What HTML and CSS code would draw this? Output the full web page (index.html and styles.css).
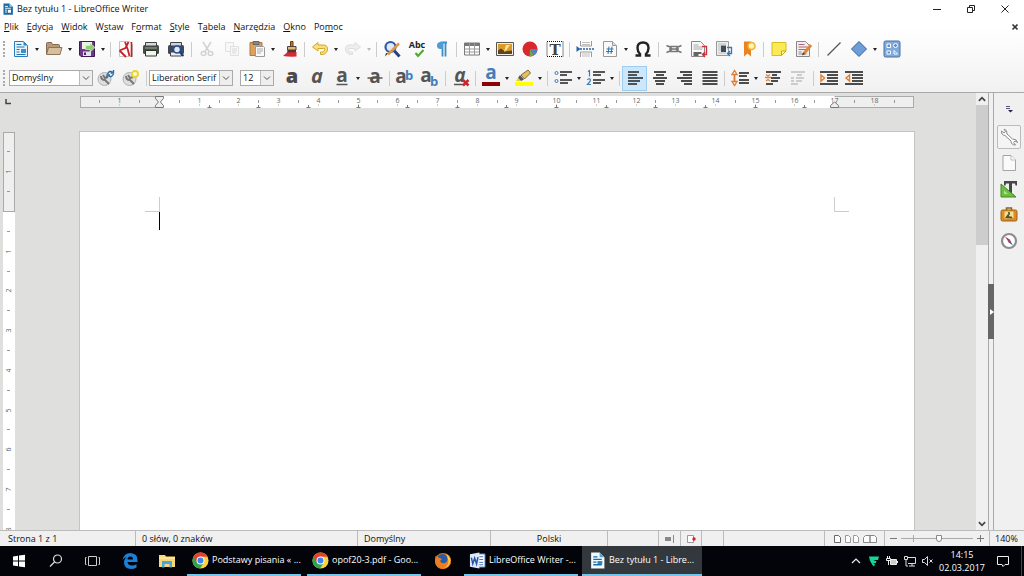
FILE: index.html
```html
<!DOCTYPE html>
<html lang="pl">
<head>
<meta charset="utf-8">
<title>Bez tytułu 1 - LibreOffice Writer</title>
<link rel="stylesheet" href="styles.css">
</head>
<body>
<svg class="defs" aria-hidden="true">
  <symbol id="doc" viewBox="0 0 16 16"><path d="M2 .5h8l4.500 4.500v10.500H2z" fill="#1b6aa5"/><path d="M10 .5V5h4.500z" fill="#9fd2f2"/><path d="M4 4.500h4M4 7h8M4 9.500h3M4 12h3" stroke="#fff" stroke-width="1.200"/><path d="M8 9h4v4H8z" fill="#fff"/></symbol>
  <symbol id="doc-light" viewBox="0 0 16 16"><path d="M2 .5h8l4.500 4.500v10.500H2z" fill="#f2f9ff"/><path d="M10 .5V5h4.500z" fill="#4fa3d8"/><path d="M4 4.500h4M4 7h8M4 9.500h3M4 12h8" stroke="#1b6aa5" stroke-width="1.200"/><path d="M8 8.500h4.500v3H8z" fill="#2f83be"/></symbol>
  <symbol id="chrome" viewBox="0 0 18 18"><circle cx="9" cy="9" r="8.500" fill="#fdd23c"/><path d="M1.600 4.800A8.500 8.500 0 0 0 8.500 17.500L12.500 11 9 9z" fill="#2ea44f"/><path d="M1.600 4.800 5.500 11 9 9V5h7.500A8.500 8.500 0 0 0 1.600 4.800z" fill="#e6402f"/><circle cx="9" cy="9" r="4.200" fill="#fff"/><circle cx="9" cy="9" r="3.200" fill="#3f83ee"/></symbol>
</svg>

<header class="chrome">
  <div class="titlebar">
    <svg class="app-icon"><use href="#doc"/></svg>
    <h1 class="title">Bez tytułu 1 - LibreOffice Writer</h1>
    <div class="window-controls">
      <button class="win" aria-label="Minimalizuj"><svg viewBox="0 0 10 10"><path d="M1 5.500h8" stroke="#222"/></svg></button>
      <button class="win" aria-label="Przywróć"><svg viewBox="0 0 10 10" fill="none" stroke="#222"><path d="M1.500 3.500h5v5h-5zM3.500 3V1.500h5v5H7"/></svg></button>
      <button class="win" aria-label="Zamknij"><svg viewBox="0 0 10 10"><path d="m1.500 1.500 7 7m0-7-7 7" stroke="#222"/></svg></button>
    </div>
  </div>
  <nav class="menubar">
    <button class="menu"><u>P</u>lik</button>
    <button class="menu"><u>E</u>dycja</button>
    <button class="menu"><u>W</u>idok</button>
    <button class="menu">W<u>s</u>taw</button>
    <button class="menu">F<u>o</u>rmat</button>
    <button class="menu"><u>S</u>tyle</button>
    <button class="menu">T<u>a</u>bela</button>
    <button class="menu"><u>N</u>arzędzia</button>
    <button class="menu"><u>O</u>kno</button>
    <button class="menu">Po<u>m</u>oc</button>
    <button class="close-doc" aria-label="Zamknij dokument"><svg viewBox="0 0 8 8"><path d="m1.500 1.500 5 5m0-5-5 5" stroke="#333" stroke-width="1.600"/></svg></button>
  </nav>

  <div class="toolbar standard">
    <span class="grip"></span>
    <button class="tool" aria-label="Nowy"><svg viewBox="0 0 18 18"><path d="M2.500 1.500h9l4 4v11h-13z" fill="#e6f3fc" stroke="#2f7db8"/><path d="M11.500 1.500v4h4z" fill="#2f86c4"/><path d="M4.500 4.500h5M4.500 7h8M4.500 9.500h3M4.500 12h3M4.500 14.500h9" stroke="#2774ad"/><path d="M9 9h5v4H9z" fill="#3f8fca"/></svg></button><button class="more" aria-label="Więcej: nowy"></button>
    <button class="tool" aria-label="Otwórz"><svg viewBox="0 0 18 18"><path d="M1.500 14V3.500q0-1 1-1h4l1 2h6q1 0 1 1V8" fill="#b79a78" stroke="#84694d"/><path d="m1.500 14.500 2-7h13.500l-2 7z" fill="#d6bf9f" stroke="#8f7355"/></svg></button><button class="more" aria-label="Więcej: otwórz"></button>
    <button class="tool" aria-label="Zapisz"><svg viewBox="0 0 18 18"><path d="M1.500 1.500h15v15H3l-1.500-1.500z" fill="#6c3a86" stroke="#3e1b55"/><path d="M4 2h10v7H4z" fill="#e9f3e4"/><path d="M5 11.500h8V16H5z" fill="#e8e2ed"/><path d="M6 12.500h2V15H6z" fill="#4a2562"/><path d="M7.500 5.500h4.500V3L17 7.500 12 12V9.500H7.500z" fill="#8ccf73" stroke="#e9f7e2" stroke-width=".6"/></svg></button><button class="more" aria-label="Więcej: zapisz"></button>
    <span class="sep"></span>
    <button class="tool" aria-label="Eksportuj jako PDF"><svg viewBox="0 0 18 18"><path d="M2.500 1.500h10l3 3v12h-13z" fill="#fff" stroke="#c6c6c6"/><path d="M14.500 2v15" stroke="#c01f27" stroke-width="1.600"/><path d="M8 2q3 7 4.500 14M2.500 10.500 8.500 8l3-6M2.500 10.500 9 17" fill="none" stroke="#cc2027" stroke-width="1.800"/></svg></button>
    <button class="tool" aria-label="Drukuj"><svg viewBox="0 0 18 18"><rect x="1" y="5" width="16" height="9" rx="1.500" fill="#474c49"/><path d="M3.500 2.500h11V6h-11z" fill="#d5dbd5" stroke="#444"/><path d="M3.500 10.500h11v5.500h-11z" fill="#eef8e8" stroke="#333"/><path d="M3 8h12" stroke="#9bac98"/></svg></button>
    <button class="tool" aria-label="Podgląd wydruku"><svg viewBox="0 0 18 18"><rect x="1" y="5" width="16" height="9" rx="1.500" fill="#3e4a59"/><path d="M3.500 2.500h11V6h-11z" fill="#ccd5de" stroke="#444"/><path d="M3.500 12h11v4h-11z" fill="#eee" stroke="#444"/><circle cx="10" cy="9.500" r="3.500" fill="#dceaff" stroke="#2b4c92" stroke-width="1.600"/><path d="m12.500 12 4 4" stroke="#1f3d80" stroke-width="2"/></svg></button>
    <span class="sep"></span>
    <button class="tool" aria-label="Wytnij" disabled><svg viewBox="0 0 18 18" fill="none" stroke="#d2d2d2" stroke-width="1.500"><path d="m5 2 6 9.500M13 2 7 11.500"/><ellipse cx="5.500" cy="13.500" rx="2.300" ry="2"/><ellipse cx="12.500" cy="13.500" rx="2.300" ry="2"/></svg></button>
    <button class="tool" aria-label="Kopiuj" disabled><svg viewBox="0 0 18 18" fill="#f8f8f8" stroke="#e0e0e0"><path d="M2.500 2.500h8v9h-8z"/><path d="M7.500 6.500h8v9h-8z"/><path d="M9 9h5M9 11h5M9 13h4" stroke="#d8d8d8"/></svg></button>
    <button class="tool" aria-label="Wklej"><svg viewBox="0 0 18 18"><path d="M2 2.500h12v13H2z" fill="#dca15d" stroke="#b07a3b"/><path d="M5 1.500h6v3H5z" fill="#888" stroke="#666"/><path d="M7.500 6.500h8l1 1v9h-9z" fill="#fafafa" stroke="#999"/><path d="M9 9h6M9 11h6M9 13h4" stroke="#aaa"/></svg></button><button class="more" aria-label="Więcej: wklej"></button>
    <button class="tool" aria-label="Klonuj formatowanie"><svg viewBox="0 0 18 18"><path d="M9.500 1.500H12v5H9.500z" fill="#c2762f" stroke="#71380c"/><path d="M6.500 6.500H15V10H6.500z" fill="#e0b67a" stroke="#4e433c"/><path d="M6.500 10H15v3.500H6z" fill="#4b3a32"/><path d="M6 12.500 15.500 12v4.500q-7 .5-13.500-.5z" fill="#d42a35"/></svg></button>
    <span class="sep slim"></span>
    <button class="tool" aria-label="Cofnij"><svg viewBox="0 0 18 18"><path d="M1.500 7 7 2.500V5h5q4.500 0 4.500 4t-4.500 5.500H9.500V12H12q1.800-.8 1.800-2.700T12 8.500H7V11z" fill="#f9e07c" stroke="#cfa928"/></svg></button><button class="more" aria-label="Więcej: cofnij"></button>
    <button class="tool" aria-label="Ponów" disabled><svg viewBox="0 0 18 18"><path d="M16.500 7 11 2.500V5H6Q1.500 5 1.500 9T6 14.500h2.500V12H6q-1.800-.8-1.800-2.700T6 8.500h5V11z" fill="#eee" stroke="#dedede"/></svg></button><button class="more faded" aria-label="Więcej: ponów" disabled></button>
    <span class="sep"></span>
    <button class="tool" aria-label="Znajdź i zamień"><svg viewBox="0 0 18 18"><circle cx="7.500" cy="7" r="5" fill="#dde9f8" stroke="#3158a5" stroke-width="2.200"/><path d="m11.500 11 5 5.500" stroke="#28407d" stroke-width="3"/><path d="M16 3.500 5 14.500" stroke="#e09645" stroke-width="2.500"/><path d="m5 13.500-3 3 1-3.500z" fill="#333"/></svg></button>
    <button class="tool" aria-label="Pisownia"><svg viewBox="0 0 18 18"><text class="glyph-sans" x="9" y="8" font-size="9" fill="#222">Abc</text><path d="m7.500 13 2.500 3 5.500-6" fill="none" stroke="#50a62e" stroke-width="2"/></svg></button>
    <button class="tool" aria-label="Znaki niedrukowane"><svg viewBox="0 0 18 18"><path d="M7.500 2.500H14M9.500 2.500v14M12.500 2.500v14" stroke="#3c8cc6" stroke-width="1.800"/><path d="M10 2H7.500Q4 2 4 5.500T7.500 9H10z" fill="#4c9dd5"/></svg></button>
    <span class="sep slim"></span>
    <button class="tool" aria-label="Tabela"><svg viewBox="0 0 18 18"><path d="M1.500 3h15v12h-15z" fill="#fff" stroke="#777"/><path d="M1 3h16v3H1z" fill="#777"/><path d="M1.500 9h15M1.500 12h15M6.500 3v12M11.500 3v12" stroke="#999"/></svg></button><button class="more" aria-label="Więcej: tabela"></button>
    <button class="tool" aria-label="Obraz"><svg viewBox="0 0 18 18"><path d="M.5 2.500h17v13H.5z" fill="#eee" stroke="#555"/><path d="M2 4h14v10H2z" fill="#d99c2b"/><path d="M2 14v-3.500l3-2 4 3 7-1V14z" fill="#5d441a"/><path d="m8 12 2-7h4l-3.500 5z" fill="#ffe49a"/></svg></button>
    <button class="tool" aria-label="Wykres"><svg viewBox="0 0 18 18"><circle cx="9" cy="9" r="7.500" fill="#d9272c"/><path d="M9 9 16.500 9A7.500 7.500 0 0 1 13 15.300z" fill="#4f83c4"/><path d="m9 9 4 6.300q-2 1.200-4.500 1.200z" fill="#69a84c"/></svg></button>
    <button class="tool" aria-label="Pole tekstowe"><svg viewBox="0 0 18 18"><path d="M1 1.500h16v15H1z" fill="#fff" stroke="#111" stroke-dasharray="1 1"/><text class="glyph" x="9" y="14.500" font-size="15">T</text></svg></button>
    <span class="sep slim"></span>
    <button class="tool" aria-label="Podział strony"><svg viewBox="0 0 18 18"><path d="M4.500 1v5h11V1M4.500 17v-5h11v5" fill="#fff" stroke="#999"/><path d="M6 2.500h8M6 4.500h8M6 14h8M6 16h8" stroke="#bbb"/><path d="M4 9h14" stroke="#2564a6" stroke-width="1.500" stroke-dasharray="2 1"/><path d="m.5 6 4 3-4 3z" fill="#2564a6"/></svg></button>
    <button class="tool" aria-label="Pole"><svg viewBox="0 0 18 18"><path d="M2.500 1.500h9l4 4v11h-13z" fill="#fafafa" stroke="#999"/><path d="M11.500 1.500v4h4" fill="#ddd" stroke="#999"/><path d="M8 6.500 7 14M11 6.500 10 14M5.500 9h7M5 11.500h7" stroke="#3474ae"/></svg></button><button class="more" aria-label="Więcej: pole"></button>
    <button class="tool" aria-label="Znak specjalny"><svg viewBox="0 0 18 18"><path d="M1.500 15.500H6V14Q3.500 11.500 3.500 8 3.500 2.500 9 2.500T14.500 8q0 3.500-2.500 6v1.500h4.500" fill="none" stroke="#222" stroke-width="2.400"/></svg></button>
    <span class="sep"></span>
    <button class="tool" aria-label="Hiperłącze"><svg viewBox="0 0 18 18" fill="none" stroke="#777" stroke-width="1.500"><path d="M1.500 5.500 5 7l2 2-2 2-3.500 1.500M16.500 5.500 13 7l-2 2 2 2 3.500 1.500M4 9h10M5 6.500h8M5 11.500h8"/></svg></button>
    <button class="tool" aria-label="Przypis dolny"><svg viewBox="0 0 18 18"><path d="M1.500 1.500h9l4 4v11h-13z" fill="#f8f8f8" stroke="#888"/><path d="M3.500 5h5M3.500 7h9M3.500 9h9" stroke="#aaa"/><path d="M3.500 13h8M3.500 15h5" stroke="#333" stroke-width="1.500"/><path d="M12 6.500h4.500v8H13M15 12l-2.500 2.500L15 17" fill="none" stroke="#c93136" stroke-width="1.300"/></svg></button>
    <button class="tool" aria-label="Przypis końcowy"><svg viewBox="0 0 18 18"><path d="M1.500 1.500h12v14h-12z" fill="#eee" stroke="#999"/><path d="M3 4h8M3 6h3M3 8h3M3 10h3M3 13h8" stroke="#bbb"/><path d="M6 5.500h5V12H6z" fill="#3f4c5a"/><path d="M12 7.500h4.500v6H13M15 11l-2.500 2.500L15 16" fill="none" stroke="#3776b8" stroke-width="1.300"/></svg></button>
    <button class="tool" aria-label="Zakładka"><svg viewBox="0 0 18 18"><path d="M4 1.500h7v15l-3.500-3-3.500 3z" fill="#e98320"/><circle cx="11.500" cy="6" r="3.500" fill="#fff2b2" stroke="#f0b030" stroke-width="1.500"/></svg></button>
    <span class="sep slim"></span>
    <button class="tool" aria-label="Komentarz"><svg viewBox="0 0 18 18"><path d="M2 2.500h14v8.500L11.500 15.500H2z" fill="#fbe956" stroke="#d6bd22"/><path d="M16 11h-4.500v4.500z" fill="#fffbc8" stroke="#c7aa1b"/></svg></button>
    <button class="tool" aria-label="Śledź zmiany"><svg viewBox="0 0 18 18"><path d="M1.500 1.500h9l4 4v11h-13z" fill="#f2eef0" stroke="#888"/><path d="M3.500 4.500h6M3.500 7h9M3.500 9.500h8" stroke="#a67"/><path d="M3.500 12h3M3.500 14h8" stroke="#888"/><path d="m16 5-7 8.500" stroke="#e48435" stroke-width="3"/><path d="m8 12.500-1 3 3-1.500z" fill="#333"/></svg></button>
    <span class="sep slim"></span>
    <button class="tool" aria-label="Linia"><svg viewBox="0 0 18 18"><path d="M2.500 15.500 15.500 2.500" stroke="#555" stroke-width="1.300"/></svg></button>
    <button class="tool" aria-label="Romb"><svg viewBox="0 0 18 18"><path d="M9 1.500 16.500 9 9 16.500 1.500 9z" fill="#6d9ed7" stroke="#355f99"/></svg></button><button class="more" aria-label="Więcej: kształty"></button>
    <button class="tool" aria-label="Funkcje rysowania"><svg viewBox="0 0 18 18"><rect x="1" y="1" width="16" height="16" rx="1.500" fill="#82a9dc" stroke="#48719f"/><g fill="#5f8dc8" stroke="#fff"><path d="M4 4h3.500v3.500H4zM4 11h3.500v3H4zM11 10.500v3.500h3.500z"/><circle cx="12.500" cy="5.500" r="2"/></g></svg></button>
  </div>

  <div class="toolbar formatting">
    <span class="grip"></span>
    <span class="combo wide"><select aria-label="Styl akapitu"><option>Domyślny</option></select><svg class="chevron" viewBox="0 0 12 14"><path d="m3 5.500 3 3 3-3" fill="none" stroke="#555"/></svg></span>
    <button class="tool" aria-label="Aktualizuj styl"><svg viewBox="0 0 18 18"><circle cx="7.500" cy="10" r="6.500" fill="#dedede" stroke="#b0b0b0"/><path d="M4 7q0 4 4 4l4 4M6 6l2 3 3-1" fill="none" stroke="#777" stroke-width="2"/><path d="M10.500 5q2-4 5-2M16.500 5q-2 4-5 2M16.500 1v3h-3M10 9V6h3" fill="none" stroke="#2b69a8" stroke-width="1.400"/></svg></button>
    <button class="tool" aria-label="Nowy styl"><svg viewBox="0 0 18 18"><circle cx="7.500" cy="10" r="6.500" fill="#dedede" stroke="#b0b0b0"/><path d="M4 7q0 4 4 4l4 4M6 6l2 3 3-1" fill="none" stroke="#777" stroke-width="2"/><circle cx="13" cy="5" r="3" fill="#fffbd0" stroke="#ecd32b" stroke-width="1.800"/></svg></button>
    <span class="sep"></span>
    <span class="combo wide"><select aria-label="Nazwa czcionki"><option>Liberation Serif</option></select><svg class="chevron" viewBox="0 0 12 14"><path d="m3 5.500 3 3 3-3" fill="none" stroke="#555"/></svg></span>
    <span class="combo size"><select aria-label="Rozmiar czcionki"><option>12</option></select><svg class="chevron" viewBox="0 0 12 14"><path d="m3 5.500 3 3 3-3" fill="none" stroke="#555"/></svg></span>
    <button class="tool" aria-label="Pogrubienie"><svg viewBox="0 0 18 18"><text class="letter heavy" x="9" y="14" font-size="20">a</text></svg></button>
    <button class="tool" aria-label="Kursywa"><svg viewBox="0 0 18 18"><text class="letter slanted" x="9" y="14" font-size="20">a</text></svg></button>
    <button class="tool" aria-label="Podkreślenie"><svg viewBox="0 0 18 18"><text class="letter" x="9" y="13" font-size="19">a</text><path d="M3.500 15.500h11" stroke="#555" stroke-width="1.500"/></svg></button><button class="more" aria-label="Więcej: podkreślenie"></button>
    <button class="tool" aria-label="Przekreślenie"><svg viewBox="0 0 18 18"><text class="letter" x="9" y="14" font-size="19">a</text><path d="M1.500 9h15" stroke="#555" stroke-width="1.500"/></svg></button>
    <span class="sep slim"></span>
    <button class="tool" aria-label="Indeks górny"><svg viewBox="0 0 18 18"><text class="letter" x="5" y="14" font-size="19">a</text><text class="glyph-sans blue" x="13" y="11" font-size="13">b</text></svg></button>
    <button class="tool" aria-label="Indeks dolny"><svg viewBox="0 0 18 18"><text class="letter" x="5" y="13" font-size="19">a</text><text class="glyph-sans blue" x="13" y="17" font-size="13">b</text></svg></button>
    <span class="sep"></span>
    <button class="tool" aria-label="Wyczyść formatowanie"><svg viewBox="0 0 18 18"><text class="letter slanted" x="8" y="13" font-size="19">a</text><path d="M2 15.500h9" stroke="#555" stroke-width="1.500"/><path d="m11 11 5.500 5.500m0-5.500L11 16.500" stroke="#c9252c" stroke-width="2.500"/></svg></button>
    <span class="sep slim"></span>
    <button class="tool" aria-label="Kolor czcionki"><svg viewBox="0 0 18 18"><text class="letter blue" x="9" y="10" font-size="19">a</text><path d="M0 13h18v4H0z" fill="#8b0000"/></svg></button><button class="more" aria-label="Więcej: kolor czcionki"></button>
    <button class="tool" aria-label="Wyróżnienie"><svg viewBox="0 0 18 18"><path d="M0 13h18v4H0z" fill="#ff0"/><path d="m6 6 7-5 2.500 3-6 6z" fill="#e9bf52" stroke="#7a6c4a"/><path d="m5 6 4 4.500-3 1.500-3-3z" fill="#555"/><path d="m3 9 2.500 3H1z" fill="#e4d428"/></svg></button><button class="more" aria-label="Więcej: wyróżnienie"></button>
    <span class="sep"></span>
    <button class="tool" aria-label="Punktory"><svg viewBox="0 0 18 18"><g fill="none" stroke="#3c7ab8"><circle cx="2.500" cy="4" r="1.500"/><circle cx="2.500" cy="12" r="1.500"/></g><path d="M6 3h12M6 6h7M6 11h12M6 14h8" stroke="#555" stroke-width="2"/></svg></button><button class="more" aria-label="Więcej: punktory"></button>
    <button class="tool" aria-label="Numerowanie"><svg viewBox="0 0 18 18"><path d="M1 2.500 2.500 1.500v6M.5 11q.5-1.500 2-1.200t.5 2.700L.5 15.500H4" fill="none" stroke="#3c7ab8" stroke-width="1.200"/><path d="M6 3h12M6 6h8M6 11h12M6 14h8" stroke="#555" stroke-width="2"/></svg></button><button class="more" aria-label="Więcej: numerowanie"></button>
    <span class="sep"></span>
    <button class="tool pressed" aria-label="Do lewej" aria-pressed="true"><svg viewBox="0 0 18 18"><path d="M2 3h11M2 6h9M2 9h15M2 12h12M2 15h9" stroke="#4b545b" stroke-width="1.800"/></svg></button>
    <button class="tool" aria-label="Wyśrodkuj"><svg viewBox="0 0 18 18"><path d="M3 3h12M5 6h8M2 9h14M4 12h10M5 15h8" stroke="#4c4c4c" stroke-width="1.800"/></svg></button>
    <button class="tool" aria-label="Do prawej"><svg viewBox="0 0 18 18"><path d="M4 3h12M7 6h9M1 9h15M5 12h11M8 15h8" stroke="#4c4c4c" stroke-width="1.800"/></svg></button>
    <button class="tool" aria-label="Wyjustuj"><svg viewBox="0 0 18 18"><path d="M1.500 3h15M1.500 6h15M1.500 9h15M1.500 12h15M1.500 15h15" stroke="#4c4c4c" stroke-width="1.800"/></svg></button>
    <span class="sep slim"></span>
    <button class="tool" aria-label="Interlinia"><svg viewBox="0 0 18 18"><path d="M3.500 4v10" stroke="#dc7b31" stroke-width="1.800"/><path d="M1 5.500 3.500 1.500 6 5.500zM1 12.500l2.500 4 2.500-4z" fill="#fff" stroke="#dc7b31" stroke-width="1.300"/><path d="M8 4h10M8 7h8M8 11h10M8 14h10" stroke="#4c4c4c" stroke-width="1.800"/></svg></button><button class="more" aria-label="Więcej: interlinia"></button>
    <button class="tool" aria-label="Zwiększ odstęp akapitu"><svg viewBox="0 0 18 18"><path d="M2 3h15M8 6h5M7 9h9M7 12h7M2 15h7" stroke="#4c4c4c" stroke-width="1.800"/><path d="M1 8.500h6M2 5.500 4 7l2-1.500M2 12l2-1.500L6 12" fill="none" stroke="#e38438" stroke-width="1.300"/></svg></button>
    <button class="tool" aria-label="Zmniejsz odstęp akapitu" disabled><svg viewBox="0 0 18 18"><path d="M2 3h14M8 6h5M2 9h3M7 9h8M2 12h3M7 12h6M2 15h7" stroke="#ccc" stroke-width="1.800"/></svg></button>
    <span class="sep"></span>
    <button class="tool" aria-label="Zwiększ wcięcie"><svg viewBox="0 0 18 18"><path d="M0 3h18M7 6h11M7 9h11M7 12h11M0 15h18" stroke="#4c4c4c" stroke-width="1.800"/><path d="m1 6 3.500 3L1 12z" fill="#fff" stroke="#df8137" stroke-width="1.500"/></svg></button>
    <button class="tool" aria-label="Zmniejsz wcięcie"><svg viewBox="0 0 18 18"><path d="M0 3h18M7 6h11M7 9h11M7 12h11M0 15h18" stroke="#4c4c4c" stroke-width="1.800"/><path d="M4.500 6 1 9l3.500 3z" fill="#fff" stroke="#df8137" stroke-width="1.500"/></svg></button>
  </div>
</header>

<div class="workspace">
  <div class="left-rail">
    <button class="tab-kind" aria-label="Tabulator"><svg viewBox="0 0 6 6"><path d="M1 0v4.500h5" fill="none" stroke="#444" stroke-width="1.500"/></svg></button>
    <svg class="vruler" id="vruler"></svg>
  </div>
  <main class="canvas">
    <svg class="hruler" id="hruler"></svg>
    <article class="sheet">
      <div class="corners"><span class="corner left"></span><span class="corner right"></span></div>
      <div class="body-text" contenteditable="true" role="textbox" aria-label="Treść dokumentu"><span class="caret"></span></div>
    </article>
  </main>
  <div class="scrollbar">
    <button class="scroll-btn" aria-label="W górę"><svg viewBox="0 0 8 8"><path d="M1.500 5.500 4 3l2.500 2.500" fill="none" stroke="#444" stroke-width="1.400"/></svg></button>
    <div class="track"><div class="thumb"></div></div>
    <button class="scroll-btn" aria-label="W dół"><svg viewBox="0 0 8 8"><path d="M1.500 2.500 4 5l2.500-2.500" fill="none" stroke="#444" stroke-width="1.400"/></svg></button>
  </div>
  <div class="splitter"><button class="handle" aria-label="Ukryj panel"><svg viewBox="0 0 5 6"><path d="M1 0v6l4-3z" fill="#fff"/></svg></button></div>
  <aside class="sidebar">
    <button class="side-menu" aria-label="Ustawienia panelu"><svg viewBox="0 0 8 8"><path d="M1 1.500h4M1 3.500h4" stroke="#557"/><path d="M3 5h5L5.500 7.500z" fill="#224"/></svg></button>
    <button class="side boxed" aria-label="Właściwości"><svg viewBox="0 0 18 18"><path d="M1.500 3Q1 7 5 7.500L11 13q0 4 4.500 4l-2-2.500 1.500-1.500 2.500 1.500Q17 11 12.500 11L7 6Q7.500 2 4 1l1.500 2.500L4 5z" fill="#fff" stroke="#888"/></svg></button>
    <button class="side" aria-label="Strona"><svg viewBox="0 0 18 18"><path d="M3 1.500h8l4.500 4.500v10.500H3z" fill="#fafafa" stroke="#a5a5a5"/><path d="M11 1.500V6h4.500" fill="#fff" stroke="#bbb"/></svg></button>
    <button class="side" aria-label="Style"><svg viewBox="0 0 18 18"><path d="M4 1h13v4.500h-1.500L15 3.500h-3v11h2V16H7v-1.500h2v-11H6l-.5 2H4z" fill="#474747"/><path d="M1 4v13h15z" fill="#70be40" stroke="#3f8d1e"/><path d="M4 10.500V14h4z" fill="#b0e28c"/></svg></button>
    <button class="side" aria-label="Galeria"><svg viewBox="0 0 18 18"><path d="M6.500 4V2h5v2" fill="none" stroke="#8a621e" stroke-width="1.500"/><rect x="1" y="4" width="16" height="11" rx="1.500" fill="#df8b1e" stroke="#9c6419"/><path d="M4.500 5.500h9v7h-9z" fill="#f8dd97"/><path d="m5 12 3-4 2 3 1-1 2 2.500z" fill="#4e5228"/><path d="M9 6v3" stroke="#53723c" stroke-width="2"/></svg></button>
    <button class="side" aria-label="Nawigator"><svg viewBox="0 0 18 18"><circle cx="9" cy="9" r="7" fill="#fff" stroke="#8d8d8d" stroke-width="2.200"/><path d="m5 4.500 5.500 3.500-2 2z" fill="#b3345a"/><path d="m13 13.500-5-3.500 2-2z" fill="#5a5a7a"/></svg></button>
  </aside>
</div>

<footer class="statusbar">
  <span class="cell">Strona 1 z 1</span>
  <span class="cell">0 słów, 0 znaków</span>
  <span class="cell">Domyślny</span>
  <span class="cell center">Polski</span>
  <span class="cell"></span>
  <span class="cell center"><svg class="st" viewBox="0 0 10 8"><path d="M0 2h6v4H0z" fill="#888"/><path d="M8.500 0v8" stroke="#888"/></svg></span>
  <span class="cell center"><svg class="st" viewBox="0 0 10 8"><path d="M1.500.5h6v7h-6z" fill="#fff" stroke="#999"/><circle cx="8" cy="4" r="1.700" fill="#c22"/></svg></span>
  <span class="cell"></span>
  <span class="cell"></span>
  <span class="cell views">
    <button aria-label="Jedna strona"><svg viewBox="0 0 7 8"><path d="M.5.5h4l2 2v5h-6z" fill="#fff" stroke="#666"/></svg></button>
    <button aria-label="Wiele stron"><svg class="two" viewBox="0 0 14 8"><path d="M.5.5h3l2 2v5h-5zM8.500.5h3l2 2v5h-5z" fill="#fff" stroke="#999"/></svg></button>
    <button aria-label="Książka"><svg class="two" viewBox="0 0 14 8"><path d="M2.500.5H7v7H.5v-5zM7 .5h4.500l2 2v5H7z" fill="#fff" stroke="#888"/></svg></button>
  </span>
  <span class="cell zoom">
    <button aria-label="Pomniejsz"><svg viewBox="0 0 7 7"><path d="M0 3.500h7" stroke="#777"/></svg></button>
    <input type="range" min="0" max="100" value="53" aria-label="Powiększenie">
    <button aria-label="Powiększ"><svg viewBox="0 0 7 7"><path d="M0 3.500h7M3.500 0v7" stroke="#777"/></svg></button>
  </span>
  <span class="cell last">140%</span>
</footer>

<nav class="taskbar">
  <button class="pin" aria-label="Start"><svg viewBox="0 0 18 18"><path d="m3 4.500 5-.7v4.700H3zM9 3.600l6-.9v5.800H9zM3 9.500h5v4.700l-5-.7zM9 9.500h6v5.800l-6-.9z" fill="#fff"/></svg></button>
  <button class="pin" aria-label="Szukaj"><svg viewBox="0 0 18 18" fill="none" stroke="#ddd" stroke-width="1.200"><circle cx="10.500" cy="7" r="4"/><path d="m7.500 10-4.500 4.500"/></svg></button>
  <button class="pin" aria-label="Widok zadań"><svg viewBox="0 0 18 18" fill="none" stroke="#ccc"><path d="M4.500 4.500h8v9h-8zM2.500 5.500h-1v7h1M14.500 5.500h1v7h-1"/></svg></button>
  <button class="pin" aria-label="Edge"><svg viewBox="0 0 18 18"><path d="M1.500 8Q3 1 9.500 1 16.500 1.500 16.500 8v2H6.500q.5 3.500 4.500 3.500 2.500 0 4.500-1.200v3.200Q13 17 10 17 3 16.500 3 10.500 3 7 6 5 3 5.500 1.500 8zM6.500 7.500H12Q12 4.500 9.300 4.500T6.500 7.500z" fill="#1a80d8"/></svg></button>
  <button class="pin" aria-label="Eksplorator plików"><svg viewBox="0 0 18 18"><path d="M1 3h6l1 1.500h9V15H1z" fill="#f8d775"/><path d="M4 9h10v6.500h-2.500V12h-5v3.500H4z" fill="#45a7df"/><path d="M1 6h16" stroke="#fff0b5"/></svg></button>
  <button class="task first"><svg><use href="#chrome"/></svg><span>Podstawy pisania « ...</span></button>
  <button class="task second"><svg><use href="#chrome"/></svg><span>opof20-3.pdf - Goo...</span></button>
  <button class="pin fox" aria-label="Firefox"><svg viewBox="0 0 18 18"><circle cx="9" cy="9" r="8" fill="#e66a1f"/><circle cx="8.500" cy="7.500" r="5.500" fill="#285ca8"/><path d="M1.500 4q2 0 3 1.500L8 7 6 9q1.500 3 5 2 3-1.500 2.500-5-1-3-3-4.500Q17 3 17 9t-8 8Q1 16 1 9z" fill="#ee7d22"/><path d="M12 2q5 3 4 8t-6 6q5-3 4.500-7T12 2z" fill="#ffd23f"/></svg></button>
  <button class="task"><svg viewBox="0 0 18 18"><path d="M8 2h9v14H8z" fill="#fff" stroke="#3c67ad"/><path d="M10 5h5M10 8h5M10 11h5M10 13.500h5" stroke="#3c67ad"/><path d="m1 2.500 10-2v17l-10-2z" fill="#dce8fa"/><path d="m2.500 6 1.500 6.500L6 6.500l2 6L9.500 5.500" fill="none" stroke="#2456a5" stroke-width="1.600"/></svg><span>LibreOffice Writer -...</span></button>
  <button class="task active"><svg><use href="#doc-light"/></svg><span>Bez tytułu 1 - Libre...</span></button>
  <div class="tray">
    <button aria-label="Ukryte ikony"><svg viewBox="0 0 12 12"><path d="m2 8 4-4 4 4" fill="none" stroke="#eee" stroke-width="1.200"/></svg></button>
    <button aria-label="Ochrona"><svg viewBox="0 0 12 12"><path d="M1 1.500h10L10 5H5.500L8.500 6.500 8 8H5l2 1-1 2.500Q2 8 1 1.500z" fill="#17d695"/></svg></button>
    <button aria-label="Bateria"><svg viewBox="0 0 12 12"><path d="M4.500 4.500h6v5h-6z" fill="#ccc" stroke="#eee"/><path d="M11.500 6v2M1.500 1v2.500M3.500 1v2.500M.5 3.500h4v2h-4zM2.500 5v5" stroke="#eee" fill="none"/></svg></button>
    <button aria-label="Sieć"><svg viewBox="0 0 12 12" fill="none" stroke="#ddd"><path d="M4 2.500h7.500v6H4M5 11h6M8 8.500V11M.5 1.500h3v3h-3zM2 5v6h2"/></svg></button>
    <button aria-label="Głośność"><svg viewBox="0 0 12 12" fill="none" stroke="#ddd"><path d="M.5 4.500h2l3-3v9l-3-3h-2zM7.500 4.500l3 3m0-3-3 3"/></svg></button>
    <time class="clock">14:15<br>02.03.2017</time>
    <button class="notify" aria-label="Powiadomienia"><svg viewBox="0 0 14 14"><path d="M1.500 2.500h11v8H9L7 12.500 6 10.500H1.500z" fill="none" stroke="#eee"/></svg></button>
  </div>
</nav>
<script src="ruler.js"></script>
</body>
</html>
```
FILE: styles.css
```css
* { box-sizing: border-box; }
html, body { height: 100%; }
body {
  margin: 0;
  display: flex;
  flex-direction: column;
  overflow: hidden;
  font: 9px/12px "Open Sans", "Noto Sans", sans-serif;
  color: #111;
  background: #f0f0f0;
}
button, select, input { font: inherit; color: inherit; margin: 0; padding: 0; border: 0; background: none; }
button { display: flex; align-items: center; justify-content: center; flex: none; }
svg { display: block; flex: none; }
.defs { width: 0; height: 0; position: absolute; }

/* Window header */
.chrome { flex: none; background: linear-gradient(#fff 30%, #f1f1f1); border-bottom: 1px solid #aaa; }
.titlebar { display: flex; align-items: center; height: 17px; padding-left: 2px; gap: 3px; }
.app-icon { width: 12px; height: 12px; }
.title { margin: 0; font-size: 9px; font-weight: 400; }
.window-controls { display: flex; margin-left: auto; padding-right: 2px; }
.win { width: 34px; height: 16px; }
.win svg { width: 10px; height: 10px; }
.menubar { display: flex; align-items: center; height: 19px; padding: 0 5px 0 4px; gap: 8px; }
.menu u { text-underline-offset: 1px; }
.close-doc { margin-left: auto; }
.close-doc svg { width: 8px; height: 8px; }

/* Toolbars */
.toolbar { display: flex; align-items: center; }
.standard { height: 26px; }
.formatting { height: 30px; padding-top: 2px; }
.grip { flex: none; width: 3px; height: 16px; margin: 0 2px 0 3px; border-left: 2px dotted #aaa; }
.formatting .grip { margin-right: 3px; }
.tool { width: 25px; height: 25px; }
.tool svg { width: 18px; height: 18px; overflow: visible; }
.tool.pressed { background: #cce6fb; border: 1px solid #9fcdf2; }
.more { width: 8px; height: 24px; }
.more::before { content: ""; border: 2px solid transparent; border-top: 3px solid #222; border-bottom: 0; }
.more.faded::before { border-top-color: #bbb; }
.sep { flex: none; width: 6px; height: 15px; background: linear-gradient(#ccc, #ccc) center / 1px 100% no-repeat; }
.sep.slim { width: 5px; }
.glyph { font-family: "DejaVu Serif", serif; font-weight: 700; fill: #444; text-anchor: middle; }
.letter, .glyph-sans { font-family: "Open Sans", sans-serif; font-weight: 700; text-anchor: middle; }
.letter { fill: #555; }
.letter.heavy { font-weight: 800; fill: #4a4a4a; }
.letter.slanted { font-style: italic; }
.letter.blue, .glyph-sans.blue { fill: #437eb8; }
.combo { position: relative; flex: none; height: 16px; background: #fff; border: 1px solid #aaa; }
.combo.wide { width: 84px; }
.combo.size { width: 34px; margin: 0 5px 0 7px; }
.combo select { display: block; width: 100%; height: 14px; padding-left: 2px; appearance: none; }
.chevron { position: absolute; top: 0; right: 0; width: 13px; height: 14px; background: #eee; border-left: 1px solid #bbb; pointer-events: none; }

/* Document area */
.workspace { flex: 1; display: flex; min-height: 0; background: #dfdfdd; }
.left-rail { flex: none; width: 16px; display: flex; flex-direction: column; padding: 6px 1px 0 3px; }
.tab-kind { width: 10px; height: 6px; margin-bottom: 27px; }
.tab-kind svg { width: 6px; height: 6px; }
.vruler { width: 12px; flex: 1; min-height: 0; }
.canvas { flex: 1; min-width: 0; display: flex; flex-direction: column; align-items: center; padding: 2px 0 0 2px; overflow: hidden; }
.hruler { width: 834px; height: 14px; margin-bottom: 22px; overflow: visible; }
.sheet { flex: 1; width: 836px; padding: 65px 65px 0; background: #fff; border: 1px solid #c4c4c2; border-bottom: 0; }
.corners { display: flex; justify-content: space-between; }
.corner { width: 15px; height: 15px; border-bottom: 1px solid #ccc; }
.corner.left { border-right: 1px solid #ccc; }
.corner.right { border-left: 1px solid #ccc; }
.body-text { padding: 0 14px; outline: 0; }
.caret { display: block; width: 1px; height: 18px; background: #000; }
.hruler text, .vruler text { font: 7px "Open Sans", sans-serif; fill: #666; text-anchor: middle; }
.scrollbar { flex: none; width: 12px; display: flex; flex-direction: column; background: #f0f0f0; }
.scroll-btn { height: 12px; }
.scroll-btn svg { width: 10px; height: 10px; }
.track { flex: 1; }
.thumb { height: 34%; background: #cdcdcd; }
.splitter { flex: none; width: 6px; display: flex; align-items: center; background: #f0f0f0; border: solid #aaa; border-width: 0 1px; }
.handle { width: 6px; height: 55px; margin: 0 -1px; background: #666; }
.handle svg { width: 5px; height: 6px; }
.sidebar { flex: none; width: 30px; display: flex; flex-direction: column; align-items: center; gap: 2px; padding-top: 9px; background: #f0f0f0; }
.side-menu { height: 14px; margin-bottom: 7px; }
.side-menu svg { width: 8px; height: 8px; }
.side { width: 24px; height: 24px; border-radius: 2px; }
.side.boxed { border: 1px solid #bbb; background: #f4f4f4; }
.side svg { width: 18px; height: 18px; }

/* Status bar */
.statusbar {
  flex: none;
  display: grid;
  grid-template-columns: 136fr 222fr 133fr 117fr 51fr 22fr 21fr 22fr 101fr 60fr 105fr 34fr;
  height: 16px;
  border-top: 1px solid #bbb;
}
.cell { display: flex; align-items: center; min-width: 0; padding-left: 6px; border-right: 1px solid #bbb; white-space: nowrap; }
.cell:first-child { padding-left: 8px; }
.cell.center { justify-content: center; padding: 0; }
.cell.last { border: 0; padding-left: 5px; }
.st { width: 10px; height: 8px; }
.views { gap: 4px; padding-left: 9px; }
.views svg { width: 7px; height: 8px; }
.views svg.two { width: 14px; }
.zoom { gap: 4px; padding-left: 5px; }
.zoom svg { width: 7px; height: 7px; }
.zoom input { flex: 1; min-width: 0; height: 12px; appearance: none; background: linear-gradient(#aaa, #aaa) center / 100% 1px no-repeat, linear-gradient(#aaa, #aaa) 12px center / 1px 7px no-repeat; }
.zoom input::-webkit-slider-thumb { appearance: none; width: 6px; height: 7px; background: #fff; border: 1px solid #888; border-radius: 0 0 3px 3px; }
.zoom button:last-child { margin-right: 5px; }

/* Taskbar */
.taskbar { flex: none; display: flex; height: 30px; color: #fff; background: #02040a; }
.pin { width: 37px; }
.pin svg { width: 18px; height: 18px; }
.task { width: 114px; justify-content: flex-start; gap: 3px; padding-left: 5px; border-bottom: 2px solid #76c5e8; white-space: nowrap; }
.task svg { width: 17px; height: 17px; }
.task.first { margin: 0 6px 0 2px; }
.fox { margin: 0 3px; }
.task.active { width: 120px; margin-left: 4px; padding-left: 7px; background: #33383c; }
.tray { display: flex; align-items: center; margin-left: auto; padding-right: 3px; border-right: 1px solid #444; margin-right: 2px; }
.tray button { width: 18px; height: 28px; }
.tray svg { width: 12px; height: 12px; }
.clock { width: 50px; text-align: center; line-height: 13px; }
.tray .notify { width: 31px; }
.tray .notify svg { width: 14px; height: 14px; }
```
FILE: ruler.js
```js
// Draws the horizontal and vertical rulers, in centimetres at the current zoom.
const CM = 834 / 21;
const MARGIN_CM = 2;
const line = (x1, y1, x2, y2, c = "#999") =>
  `<path d="M${x1} ${y1}L${x2} ${y2}" stroke="${c}"/>`;

function horizontal() {
  let out = `<rect x="0.5" y="1.5" width="833" height="11" fill="#efefef" stroke="#aaa"/>`;
  out += `<rect x="${2 * CM}" y="1" width="${17 * CM}" height="12" fill="#fff"/>`;
  for (let i = 1; i < 42; i++) {
    const x = Math.floor(i * CM / 2) + 0.5;
    const n = Math.abs(i / 2 - MARGIN_CM);
    if (i % 2) out += line(x, 5, x, 8);
    else if (n) out += `<text x="${x}" y="8">${n}</text>` + line(x, 9, x, 11, "#ccc");
  }
  for (let t = 1.25; t < 17; t += 1.25) {
    const x = Math.floor((t + MARGIN_CM) * CM) + 0.5;
    out += `<path d="M${x - 2} 12.500h4M${x} 10v3" stroke="#777"/>`;
  }
  const a = 2 * CM, b = 19 * CM;
  out += `<path d="M${a - 4} 1.500h8v2l-3 3.500 3 3.500v2h-8v-2l3-3.500-3-3.500z" fill="#eee" stroke="#777"/>`;
  out += `<path d="M${b} 7l4 3.500v2h-8v-2z" fill="#eee" stroke="#777"/>`;
  document.getElementById("hruler").innerHTML = out;
}

function vertical() {
  const ruler = document.getElementById("vruler");
  const height = ruler.getBoundingClientRect().height;
  let out = `<rect x="0" y="80" width="12" height="${height}" fill="#fff"/>`;
  out += `<rect x="0.5" y="0.5" width="11" height="79" fill="#efefef" stroke="#aaa"/>`;
  for (let i = 1; i * CM / 2 < height; i++) {
    const y = Math.floor(i * CM / 2) + 0.5;
    const n = Math.abs(i / 2 - MARGIN_CM);
    if (i % 2) out += line(4, y, 7, y);
    else if (n) out += `<text transform="translate(8 ${y}) rotate(-90)">${n}</text>`;
  }
  ruler.innerHTML = out;
}

horizontal();
vertical();
```
